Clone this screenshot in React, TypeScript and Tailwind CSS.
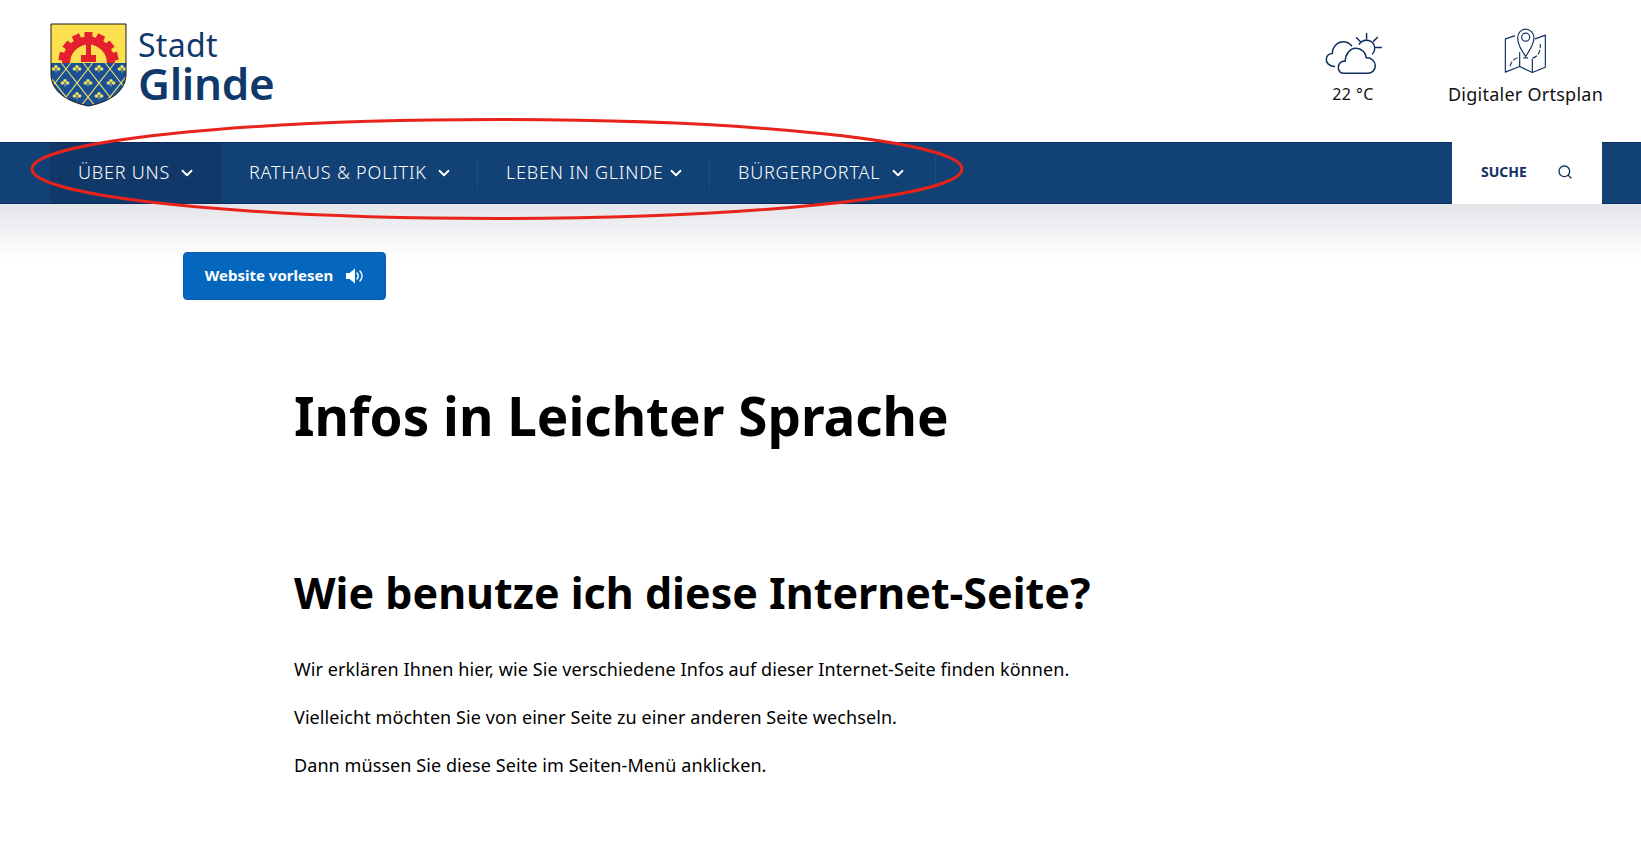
import React from 'react';
import { ChevronDown, Search } from 'lucide-react';

const navItems = [
  { label: 'ÜBER UNS', active: true, textWidth: 'w-[92px]' },
  { label: 'RATHAUS & POLITIK', active: false, textWidth: 'w-[181px]' },
  { label: 'LEBEN IN GLINDE', active: false, textWidth: 'w-[153px]' },
  { label: 'BÜRGERPORTAL', active: false, textWidth: 'w-[151px]' },
];

const teeth = [-78, -52, -26, 0, 26, 52, 78];
const latticeOffsets = [-4, -3, -2, -1, 0, 1, 2, 3, 4];
const clovers = [
  [5, 45], [26, 45], [48, 45], [71, 45],
  [14, 59], [37, 59], [60, 59],
  [3, 72], [26, 72], [48, 72], [71, 72],
];

// stadt wappen, gear on yellow over blue lattice
const CoatOfArms = () => (
  <svg width="77" height="84" viewBox="-1 -1 77 84" className="shrink-0">
    <defs>
      <clipPath id="shield">
        <path d="M0 0H75V50C75 68 58 78 37.5 82C17 78 0 68 0 50Z" />
      </clipPath>
    </defs>
    <g clipPath="url(#shield)">
      <rect x="0" y="0" width="75" height="40" fill="#fce04f" />
      <rect x="0" y="39" width="75" height="44" fill="#1c5096" />
      <g stroke="#e9dc62" strokeWidth="1.200">
        {latticeOffsets.map((k) => (
          <React.Fragment key={k}>
            <line x1={32.3 + 22 * k} y1="39" x2={67.6 + 22 * k} y2="84" />
            <line x1={41.7 + 22 * k} y1="39" x2={6.4 + 22 * k} y2="84" />
          </React.Fragment>
        ))}
      </g>
      {clovers.map(([x, y]) => (
        <g key={`${x}-${y}`} fill="#ecdf5e">
          <circle cx={x - 2.6} cy={y} r="1.800" />
          <circle cx={x + 2.6} cy={y} r="1.800" />
          <circle cx={x} cy={y - 2.2} r="1.800" />
          <rect x={x - 0.4} y={y} width="0.8" height="3.500" />
        </g>
      ))}
      <g fill="#e5202e">
        {teeth.map((a) => (
          <rect key={a} x="33.500" y="8" width="8" height="10" transform={`rotate(${a} 37.5 38)`} />
        ))}
        <path d="M11 39A26.500 26.500 0 0 1 64 39H56A18.500 18.500 0 0 0 19 39Z" />
        <rect x="35" y="17" width="5" height="16" />
        <rect x="30" y="31" width="15" height="7" />
      </g>
    </g>
    <path d="M0 0H75V50C75 68 58 78 37.5 82C17 78 0 68 0 50Z" fill="none" stroke="#1a1a1a" strokeWidth="1" />
  </svg>
);

const WeatherIcon = () => (
  <svg width="57" height="42" viewBox="70 65 170 125" fill="none" stroke="#10305f" strokeWidth="4.500" strokeLinecap="round" strokeLinejoin="round">
    <path d="M98 168C82 166 72 156 74 145C75 135 83 129 92 129C92 108 108 94 124 94C134 94 143 98 149 106" />
    <path d="M125 188C112 188 109 176 110 168C111 157 120 151 130 152C131 130 145 113 162 113C179 113 192 126 193 142C208 141 220 152 220 165C220 178 211 188 198 188Z" />
    <path d="M172 101C178 92 190 87 200 90C213 93 220 105 218 117C217 123 215 127 212 130" />
    <path d="M194 69V84M164 82L175 93M226 81L215 92M221 111H238" />
  </svg>
);

const MapIcon = () => (
  <svg width="45" height="47" viewBox="600 50 135 140" fill="none" stroke="#10305f" strokeWidth="3.500" strokeLinecap="round" strokeLinejoin="round">
    <path d="M635 76L607 85V185L650 168L688 186L727 170V74L697 85" />
    <path d="M668 138C655 118 644 102 644 82C644 67 655 56 668 56C681 56 693 67 693 82C693 102 681 118 668 138Z" />
    <circle cx="668" cy="80" r="12" />
    <path d="M650 126V168M688 146V186" />
    <path d="M622 166C624 154 632 146 644 142M662 142H676M690 142C704 138 712 126 712 102" strokeDasharray="12 8" />
  </svg>
);

const SpeakerIcon = () => (
  <svg width="18" height="16" viewBox="0 0 18 16" className="shrink-0">
    <path d="M0 5H3.500L9 0.500V15.500L3.500 11H0Z" fill="#fff" />
    <path d="M11 5C12.500 6.500 12.500 9.500 11 11" fill="none" stroke="#fff" strokeWidth="1.500" strokeLinecap="round" />
    <path d="M14 3C16.500 6 16.500 10 14 13" fill="none" stroke="#fff" strokeWidth="1.300" strokeLinecap="round" />
  </svg>
);

export default function App() {
  return (
    <div className="relative h-[841px] overflow-hidden bg-white font-['Noto_Sans',sans-serif] text-black">
      {/* Header */}
      <header className="flex h-[142px] items-start justify-between pl-[50px] pr-[39px]">
        <div className="flex items-start gap-[11px] pt-[23px]">
          <CoatOfArms />
          <div className="pt-[6px] text-[#10396b]">
            <div className="text-[32px] leading-[32px] tracking-[0.3px]">Stadt</div>
            <div className="text-[44px] font-semibold leading-[44px] tracking-[-0.3px]">Glinde</div>
          </div>
        </div>
        <div className="flex items-start gap-[67px]">
          <div className="flex w-[58px] flex-col items-center pt-[32px]">
            <WeatherIcon />
            <div className="mt-[10px] text-[16px] leading-5 tracking-[0.4px] text-[#111]">22 °C</div>
          </div>
          <div className="flex w-[153px] flex-col items-center pt-[27px]">
            <MapIcon />
            <div className="mt-[10px] whitespace-nowrap text-[18px] leading-5 tracking-[0.25px] text-[#111]">Digitaler Ortsplan</div>
          </div>
        </div>
      </header>

      {/* Main navigation */}
      <nav className="flex h-[62px] items-stretch border-y border-[#0b2c5e] bg-[#124175]">
        <div className="flex items-stretch pl-[50px]">
          {navItems.map((item, i) => (
            <div key={item.label} className="flex items-center">
              <a
                className={`flex h-full items-center px-7 pb-px ${item.active ? 'w-[171px] bg-[#10396a]' : ''} ${i === 1 ? 'w-[256px]' : ''} ${i === 2 ? 'w-[231px]' : ''} ${i === 3 ? 'w-[225px]' : ''}`}
              >
                <span className={`${item.textWidth} whitespace-nowrap text-[18px] font-light tracking-[0.8px] text-white`}>{item.label}</span>
                <ChevronDown className="ml-[8px] shrink-0 text-white" size={18} strokeWidth={2.5} />
              </a>
              {i > 0 && <div className="h-8 w-px bg-[#1d4e85]" />}
            </div>
          ))}
        </div>
        <div className="ml-auto mr-[39px] flex h-[62px] w-[150px] -translate-y-px items-center bg-white pb-[2px] pl-[29px]">
          <span className="pb-px text-[14px] font-bold text-[#10305f]">SUCHE</span>
          <Search className="ml-[30px] text-[#10305f]" size={16} strokeWidth={2} />
        </div>
      </nav>

      {/* Content */}
      <main className="bg-gradient-to-b from-[#e4e5ea] via-white via-[55px] to-white pt-12">
        <div className="pl-[183px]">
          <button className="flex h-12 w-[203px] items-center justify-center gap-[13px] rounded border border-[#0a5bab] bg-[#0566bd] pb-px text-[15px] font-bold text-white">
            Website vorlesen
            <SpeakerIcon />
          </button>
        </div>
        <div className="pl-[294px]">
          <h1 className="mt-[82px] text-[53px] font-bold leading-[68px]">Infos in Leichter Sprache</h1>
          <h2 className="mt-[113px] text-[43px] font-bold leading-[60px]">Wie benutze ich diese Internet-Seite?</h2>
          <p className="mt-[32px] text-[18px] leading-7 tracking-[0.08px]">Wir erklären Ihnen hier, wie Sie verschiedene Infos auf dieser Internet-Seite finden können.</p>
          <p className="mt-5 text-[18px] leading-7 tracking-[0.08px]">Vielleicht möchten Sie von einer Seite zu einer anderen Seite wechseln.</p>
          <p className="mt-5 text-[18px] leading-7 tracking-[0.08px]">Dann müssen Sie diese Seite im Seiten-Menü anklicken.</p>
        </div>
      </main>

      {/* Red annotation drawn over the nav */}
      <svg className="pointer-events-none absolute left-[29px] top-[117px]" width="938" height="104" viewBox="0 0 938 104" fill="none">
        <ellipse cx="468" cy="52" rx="465" ry="49.500" stroke="#e8231c" strokeWidth="3" />
      </svg>
    </div>
  );
}
